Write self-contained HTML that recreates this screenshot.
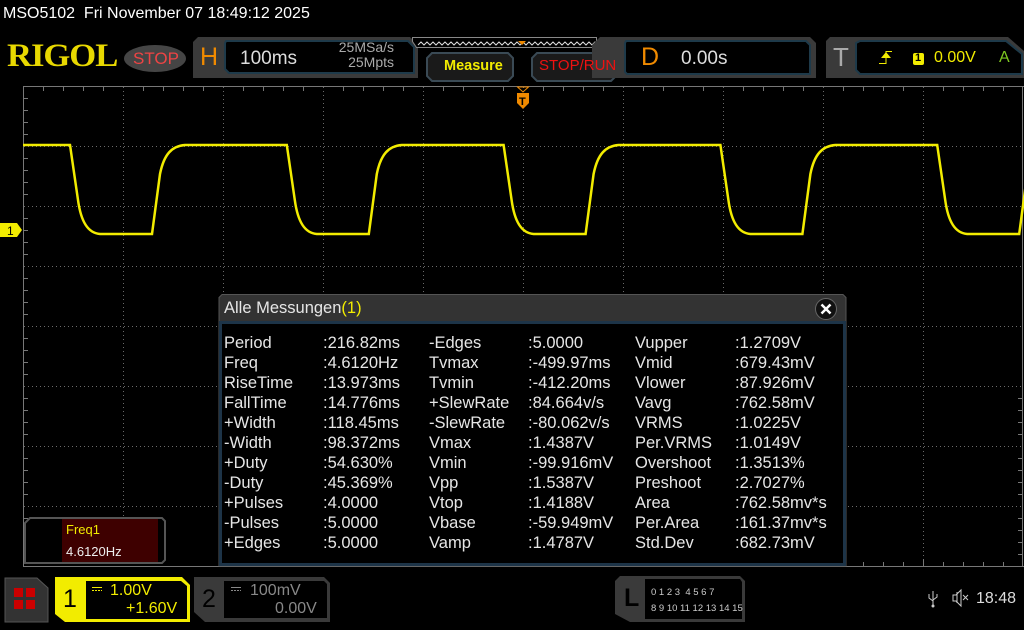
<!DOCTYPE html>
<html><head><meta charset="utf-8"><style>
*{margin:0;padding:0;box-sizing:border-box}
body{width:1024px;height:630px;background:#000;overflow:hidden;position:relative;font-family:"Liberation Sans",sans-serif;color:#ddd}
.a{position:absolute;white-space:nowrap}
.m{position:absolute;font-size:16.5px;color:#e6e6e6;line-height:20px}
</style></head><body>
<svg class="a" style="left:0;top:0" width="1024" height="630">
<g stroke="#6a6a6a" stroke-width="1" stroke-dasharray="1,3">
<line x1="123.5" y1="87" x2="123.5" y2="566"/><line x1="223.5" y1="87" x2="223.5" y2="566"/><line x1="323.5" y1="87" x2="323.5" y2="566"/><line x1="423.5" y1="87" x2="423.5" y2="566"/><line x1="523.5" y1="87" x2="523.5" y2="566"/><line x1="623.5" y1="87" x2="623.5" y2="566"/><line x1="723.5" y1="87" x2="723.5" y2="566"/><line x1="823.5" y1="87" x2="823.5" y2="566"/><line x1="923.5" y1="87" x2="923.5" y2="566"/>
<line x1="24" y1="146.5" x2="1023" y2="146.5"/><line x1="24" y1="206.5" x2="1023" y2="206.5"/><line x1="24" y1="266.5" x2="1023" y2="266.5"/><line x1="24" y1="326.5" x2="1023" y2="326.5"/><line x1="24" y1="386.5" x2="1023" y2="386.5"/><line x1="24" y1="446.5" x2="1023" y2="446.5"/><line x1="24" y1="506.5" x2="1023" y2="506.5"/>
</g>
<g stroke="#777" stroke-width="1">
<line x1="23.5" y1="86" x2="23.5" y2="567"/><line x1="23" y1="86.5" x2="1024" y2="86.5"/><line x1="1022.5" y1="86" x2="1022.5" y2="567"/><line x1="23" y1="566.5" x2="1024" y2="566.5"/>
</g>
<path stroke="#777" d="M43.5,87v4M63.5,87v4M83.5,87v4M103.5,87v4M143.5,87v4M163.5,87v4M183.5,87v4M203.5,87v4M243.5,87v4M263.5,87v4M283.5,87v4M303.5,87v4M343.5,87v4M363.5,87v4M383.5,87v4M403.5,87v4M443.5,87v4M463.5,87v4M483.5,87v4M503.5,87v4M543.5,87v4M563.5,87v4M583.5,87v4M603.5,87v4M643.5,87v4M663.5,87v4M683.5,87v4M703.5,87v4M743.5,87v4M763.5,87v4M783.5,87v4M803.5,87v4M843.5,87v4M863.5,87v4M883.5,87v4M903.5,87v4M943.5,87v4M963.5,87v4M983.5,87v4M1003.5,87v4
M24,98.5h4M24,110.5h4M24,122.5h4M24,134.5h4M24,158.5h4M24,170.5h4M24,182.5h4M24,194.5h4M24,218.5h4M24,230.5h4M24,242.5h4M24,254.5h4M24,278.5h4M24,290.5h4M24,302.5h4M24,314.5h4M24,338.5h4M24,350.5h4M24,362.5h4M24,374.5h4M24,398.5h4M24,410.5h4M24,422.5h4M24,434.5h4M24,458.5h4M24,470.5h4M24,482.5h4M24,494.5h4M24,518.5h4M24,530.5h4M24,542.5h4M24,554.5h4
M1018,398.5h4M1018,410.5h4M1018,422.5h4M1018,434.5h4M1018,458.5h4M1018,470.5h4M1018,482.5h4M1018,494.5h4M1018,518.5h4M1018,530.5h4M1018,542.5h4M1018,554.5h4
M863.5,562v4M883.5,562v4M903.5,562v4M923.5,559v7M943.5,562v4M963.5,562v4M983.5,562v4M1003.5,562v4"/>
<path fill="none" stroke="#f2ec00" stroke-width="2.5" d="M23,145 H70 l8,55 c3,22 10,33 22,34 H152 l8,-60 c4,-20 12,-28 25,-29 H286.8 l8,55 c3,22 10,33 22,34 H368.8 l8,-60 c4,-20 12,-28 25,-29 H503.6 l8,55 c3,22 10,33 22,34 H585.6 l8,-60 c4,-20 12,-28 25,-29 H720.4 l8,55 c3,22 10,33 22,34 H802.4 l8,-60 c4,-20 12,-28 25,-29 H937.2 l8,55 c3,22 10,33 22,34 H1019.2 l8,-60"/>
<path fill="#f2ec00" d="M0,223h17l5,7l-5,7h-17z"/>
<text x="7" y="235" font-size="12" fill="#000" font-family="Liberation Sans">1</text>
<path fill="none" stroke="#f08a00" d="M517.5,87h11l-5.5,5z"/>
<path fill="#f08a00" d="M517,93h12v10l-6,6l-6,-6z"/>
<text x="519" y="105" font-size="11" fill="#000" font-weight="bold">T</text>

<path fill="#3a3a3a" d="M198,37h212l8,8v33h-225v-36z"/>
<path fill="#000" stroke="#1e3a4a" stroke-width="2" d="M226,41h182l6,6v26h-185l-4,-4v-26z"/>
<path fill="#000" stroke="#888" d="M412.5,37.5h184v4l-4,6h-176l-4,-6z"/>
<path fill="none" stroke="#ddd" d="M418,45 l3,-3 3,3 3,-3 3,3 3,-3 3,3 3,-3 3,3 3,-3 3,3 3,-3 3,3 3,-3 3,3 3,-3 3,3 3,-3 3,3 3,-3 3,3 3,-3 3,3 3,-3 3,3 3,-3 3,3 3,-3 3,3 3,-3 3,3 3,-3 3,3 3,-3 3,3 3,-3 3,3 3,-3 3,3 3,-3 3,3 3,-3 3,3 3,-3 3,3 3,-3 3,3 3,-3 3,3 3,-3 3,3 3,-3 3,3 3,-3 3,3 3,-3 3,3 3,-3 3,3 3,-3 3,3 3,-3 3,3 3,-3 3,3 3,-3 3,3 3,-3 3,3 3,-3 3,3 3,-3 3,3 3,-3 3,3"/>
<path fill="#f08a00" d="M518,41h8l-4,4z"/>
<path fill="#1a1a1a" stroke="#3a4a55" stroke-width="2" d="M432,53h76l5,5v18l-5,5h-76l-5,-5v-18z"/>
<path fill="#1a1a1a" stroke="#3a4a55" stroke-width="2" d="M537,53h74l5,5v18l-5,5h-74l-5,-5v-18z"/>
<path fill="#3a3a3a" d="M600,37h210l6,6v35h-224v-33z"/>
<path fill="#000" stroke="#1e3a4a" stroke-width="2" d="M626,41h180l4,4v29h-183l-2,-2v-29z"/>
<path fill="#3a3a3a" d="M830,37h178l16,14v27h-198v-37z"/>
<path fill="#000" stroke="#1e3a4a" stroke-width="2" d="M860,41h146l16,13v20h-162l-4,-4v-27z"/>
<path fill="#f2ec00" d="M881,58h10l-5,-6z"/><path stroke="#f2ec00" fill="none" d="M879,63.5h7v-12h6M886,52v11"/>
<rect x="913" y="53" width="11" height="12" rx="2" fill="#f2ec00"/>
<ellipse cx="155" cy="58.5" rx="31" ry="13.5" fill="#454545"/>

<path fill="#333" stroke="#555" d="M222,294.5h621l3,3v268.5h-627v-268.5z"/>
<rect x="220.5" y="322.5" width="624" height="242" fill="#000" stroke="#1d3448" stroke-width="3"/>
<circle cx="826" cy="309" r="10.5" fill="#111" stroke="#666"/>
<path stroke="#fff" stroke-width="2.5" d="M821.5,304.5l9,9M830.5,304.5l-9,9"/>

<path fill="#000" stroke="#555" stroke-width="2" d="M30,518h132l3,3v39l-3,3h-137v-40z"/>
<rect x="62" y="519" width="96" height="43" fill="#3e0000"/>

<path fill="#333" stroke="#555" d="M5,578h32l11,10v34h-43z"/>
<rect x="14" y="588" width="9" height="9" fill="#c00"/><rect x="26" y="588" width="9" height="9" fill="#c00"/><rect x="14" y="600" width="9" height="9" fill="#c00"/><rect x="26" y="600" width="9" height="9" fill="#c00"/>
<path fill="#f2ec00" d="M55,577h127l8,8v37h-125l-10,-8z"/>
<path fill="#000" d="M86,581h95l6,5v33h-101z"/>
<path fill="#3a3a3a" d="M194,577h130l6,6v39h-125l-11,-10z"/>
<path fill="#000" d="M224,581h100l3,3v34h-103z"/>
<path stroke="#f2ec00" d="M92,587.5h10M92,590.5h2M95,590.5h2M98,590.5h2M101,590.5h1"/>
<path stroke="#888" d="M231,587.5h10M231,590.5h2M234,590.5h2M237,590.5h2M240,590.5h1"/>
<path fill="#3a3a3a" d="M620,576h120l5,5v41h-115l-15,-8v-33z"/>
<path fill="#000" d="M645,579h95l2,3v37h-97z"/>
<path stroke="#ccc" fill="none" d="M933,591v14M929,594v4l4,3M937,594v3l-4,3"/><circle cx="933" cy="606" r="1.5" fill="#ccc"/>
<path stroke="#ccc" fill="none" d="M953,595h3l5,-5v16l-5,-5h-3z M957,592v11"/>
<path stroke="#ccc" d="M963,595l5,5M968,595l-5,5"/>
</svg>

<div class="a" style="left:3px;top:5px;font-size:16px;color:#fff">MSO5102&nbsp; Fri November 07 18:49:12 2025</div>
<div class="a" style="left:7px;top:38px;font-family:'Liberation Serif',serif;font-weight:bold;font-size:33px;color:#e8d800;letter-spacing:-1px;transform:scaleX(1.05);transform-origin:left">RIGOL</div>
<div class="a" style="left:133px;top:49px;font-size:17px;color:#ee4444">STOP</div>
<div class="a" style="left:200px;top:43px;font-size:25px;color:#f08a00">H</div>
<div class="a" style="left:240px;top:48px;font-size:19px;color:#ddd">100ms</div>
<div class="a" style="left:332px;top:40px;font-size:14px;color:#aaa;line-height:15px;text-align:right;width:62px">25MSa/s<br>25Mpts</div>
<div class="a" style="left:444px;top:58px;font-size:14.5px;font-weight:bold;color:#f2ec00">Measure</div>
<div class="a" style="left:539px;top:57px;font-size:15px;color:#ee1111">STOP/RUN</div>
<div class="a" style="left:641px;top:43px;font-size:25px;color:#f08a00">D</div>
<div class="a" style="left:681px;top:48px;font-size:19px;color:#ddd">0.00s</div>
<div class="a" style="left:833px;top:42px;font-size:26px;color:#aaa">T</div>
<div class="a" style="left:915px;top:52px;font-size:11px;color:#000;font-weight:bold">1</div>
<div class="a" style="left:934px;top:49px;font-size:16px;color:#f2ec00">0.00V</div>
<div class="a" style="left:999px;top:49px;font-size:16px;color:#7ec820">A</div>

<div class="a" style="left:224px;top:299px;font-size:16.5px;color:#e6e6e6">Alle Messungen<span style="color:#f2ec00">(1)</span></div>
<div class="m" style="left:224px;top:333px">Period<br>Freq<br>RiseTime<br>FallTime<br>+Width<br>-Width<br>+Duty<br>-Duty<br>+Pulses<br>-Pulses<br>+Edges</div>
<div class="m" style="left:323px;top:333px">:216.82ms<br>:4.6120Hz<br>:13.973ms<br>:14.776ms<br>:118.45ms<br>:98.372ms<br>:54.630%<br>:45.369%<br>:4.0000<br>:5.0000<br>:5.0000</div>
<div class="m" style="left:429px;top:333px">-Edges<br>Tvmax<br>Tvmin<br>+SlewRate<br>-SlewRate<br>Vmax<br>Vmin<br>Vpp<br>Vtop<br>Vbase<br>Vamp</div>
<div class="m" style="left:528px;top:333px">:5.0000<br>:-499.97ms<br>:-412.20ms<br>:84.664v/s<br>:-80.062v/s<br>:1.4387V<br>:-99.916mV<br>:1.5387V<br>:1.4188V<br>:-59.949mV<br>:1.4787V</div>
<div class="m" style="left:635px;top:333px">Vupper<br>Vmid<br>Vlower<br>Vavg<br>VRMS<br>Per.VRMS<br>Overshoot<br>Preshoot<br>Area<br>Per.Area<br>Std.Dev</div>
<div class="m" style="left:735px;top:333px">:1.2709V<br>:679.43mV<br>:87.926mV<br>:762.58mV<br>:1.0225V<br>:1.0149V<br>:1.3513%<br>:2.7027%<br>:762.58mv*s<br>:161.37mv*s<br>:682.73mV</div>

<div class="a" style="left:66px;top:522px;font-size:13px;color:#f2ec00">Freq1</div>
<div class="a" style="left:66px;top:544px;font-size:13px;color:#eee">4.6120Hz</div>

<div class="a" style="left:63px;top:585px;font-size:25px;color:#000">1</div>
<div class="a" style="left:110px;top:582px;font-size:16px;color:#f2ec00">1.00V</div>
<div class="a" style="left:126px;top:600px;font-size:16px;color:#f2ec00">+1.60V</div>
<div class="a" style="left:202px;top:585px;font-size:25px;color:#000">2</div>
<div class="a" style="left:250px;top:582px;font-size:16px;color:#888">100mV</div>
<div class="a" style="left:275px;top:600px;font-size:16px;color:#888">0.00V</div>
<div class="a" style="left:624px;top:584px;font-size:25px;color:#000;font-weight:bold">L</div>
<div class="a" style="left:651px;top:585px;font-size:9.5px;color:#ccc;line-height:16px">0 1 2 3 &nbsp;4 5 6 7<br>8 9 10 11 12 13 14 15</div>
<div class="a" style="left:976px;top:590px;font-size:16px;color:#ddd">18:48</div>
</body></html>
